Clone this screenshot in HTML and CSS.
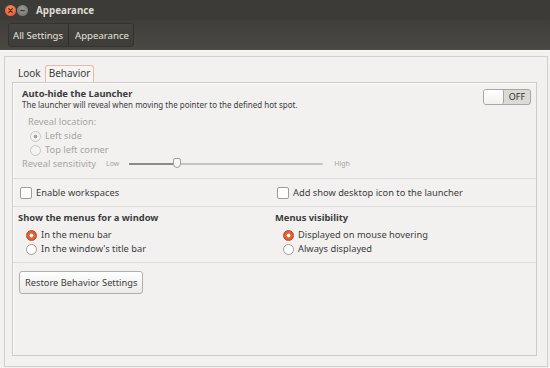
FILE: index.html
```html
<!DOCTYPE html>
<html lang="en">
<head>
  <meta charset="UTF-8">
  <title>Appearance</title>
  <link rel="stylesheet" href="styles.css">
</head>
<body>
  <div class="window">
    <!-- title bar -->
    <div class="titlebar">
      <span class="wbtn close"><svg width="11" height="11" viewBox="0 0 11 11"><path d="M3.7 3.7 L7.3 7.3 M7.3 3.7 L3.7 7.3" stroke="#5a2412" stroke-width="1.2" stroke-linecap="round"/></svg></span>
      <span class="wbtn mini"><svg width="11" height="11" viewBox="0 0 11 11"><path d="M3.3 5.5 H7.7" stroke="#3a3936" stroke-width="1.2"/></svg></span>
      <span class="title">Appearance</span>
    </div>

    <!-- breadcrumb toolbar -->
    <div class="toolbar">
      <div class="crumbs">
        <span class="crumb">All Settings</span>
        <span class="crumb">Appearance</span>
      </div>
    </div>

    <div class="content">
      <div class="frame">
        <div class="tabs">
          <span class="tab">Look</span>
          <span class="tab active">Behavior</span>
        </div>

        <div class="panel">
          <div class="launcher">
            <div class="head">
              <div>
                <div class="bold">Auto-hide the Launcher</div>
                <div class="desc">The launcher will reveal when moving the pointer to the defined hot spot.</div>
              </div>
              <div class="toggle"><span class="knob"></span><span class="off">OFF</span></div>
            </div>
            <div class="disabled loc">Reveal location:</div>
            <div class="row disabled indent"><span class="radio dis on"></span>Left side</div>
            <div class="row disabled indent"><span class="radio dis"></span>Top left corner</div>
            <div class="row disabled sens">
              <span class="sens-label">Reveal sensitivity</span>
              <span class="tiny low">Low</span>
              <span class="slider"><span class="fill"></span><span class="thumb"></span></span>
              <span class="tiny">High</span>
            </div>
          </div>

          <div class="grid checks">
            <div class="row"><span class="check"></span>Enable workspaces</div>
            <div class="row"><span class="check"></span>Add show desktop icon to the launcher</div>
          </div>

          <div class="grid menus">
            <div>
              <div class="bold">Show the menus for a window</div>
              <div class="row opt first"><span class="radio on"></span>In the menu bar</div>
              <div class="row opt"><span class="radio"></span>In the window's title bar</div>
            </div>
            <div>
              <div class="bold">Menus visibility</div>
              <div class="row opt first"><span class="radio on"></span>Displayed on mouse hovering</div>
              <div class="row opt"><span class="radio"></span>Always displayed</div>
            </div>
          </div>

          <div class="restore">
            <button class="btn">Restore Behavior Settings</button>
          </div>
        </div>
      </div>
    </div>
  </div>
</body>
</html>
```
FILE: styles.css
```css
html, body {
  margin: 0;
  padding: 0;
  background: #f2f1f0;
  color: #3c3c3c;
  font-family: 'Noto Sans', 'DejaVu Sans', sans-serif;
  font-size: 9.3px;
}
.window {
  width: 550px;
  height: 368px;
  overflow: hidden;
  display: flex;
  flex-direction: column;
}
/* title bar */
.titlebar {
  height: 20px;
  background: #3c3b37;
  display: flex;
  align-items: center;
  padding-left: 5px;
}
.wbtn {
  width: 11px;
  height: 11px;
  border-radius: 50%;
  margin-right: 1px;
  display: flex;
}
.close {
  background: radial-gradient(circle at 50% 35%, #f58c5c, #df5526);
}
.mini {
  background: radial-gradient(circle at 50% 35%, #9a9893, #6e6d69);
}
.title {
  margin-left: 7px;
  color: #dfdbd2;
  font-weight: bold;
  font-size: 9.8px;
}
/* toolbar */
.toolbar {
  height: 30px;
  background: linear-gradient(#3f3e3a, #4a4944);
  display: flex;
  align-items: center;
  padding-left: 8px;
}
.crumbs {
  display: flex;
  border: 1px solid #34332f;
  border-radius: 3px;
  height: 22px;
  background: linear-gradient(#45443f, #3e3d39);
}
.crumb {
  color: #e6e3dc;
  font-size: 9.6px;
  padding: 0 5px 0 4px;
  display: flex;
  align-items: center;
}
.crumb + .crumb {
  border-left: 1px solid #2f2e2b;
  padding: 0 4px 0 6px;
}
/* content frame */
.content {
  flex: 1;
  padding: 5px 2px 1px 4px;
  background: #f2f1f0;
  border-top: 1px solid #fbfbfa;
}
.frame {
  height: 100%;
  box-sizing: border-box;
  border: 1px solid #d3d0cb;
  padding: 7px 10px 10px 7px;
  display: flex;
  flex-direction: column;
}
.tabs {
  display: flex;
  align-items: flex-end;
  height: 18px;
  padding-left: 3px;
}
.tab {
  padding: 0 3px 1px 3px;
  font-size: 10px;
  color: #3c3c3c;
  line-height: 15px;
}
.tab.active {
  border: 1px solid #e9b9a9;
  border-bottom: none;
  border-radius: 3px 3px 0 0;
  background: #f6f5f4;
  margin-left: 1px;
  padding: 0 3px 1px 3px;
}
.panel {
  flex: 1;
  border: 1px solid #cfccc7;
  box-shadow: inset 1px 1px 0 #fbfbfa;
  display: flex;
  flex-direction: column;
}
.bold {
  font-weight: bold;
  font-size: 9.4px;
  line-height: 12px;
}
.desc {
  font-size: 8px;
  line-height: 10px;
}
.disabled {
  color: #a7a49f;
}
.launcher {
  padding: 5px 5px 7px 9px;
  border-bottom: 1px solid #dedcd8;
}
.head {
  display: flex;
  justify-content: space-between;
  align-items: flex-start;
}
.toggle {
  margin-top: 1px;
  width: 46px;
  height: 14px;
  border: 1px solid #a9a6a1;
  border-radius: 3px;
  display: flex;
  overflow: hidden;
  background: #dcdad6;
}
.knob {
  width: 19px;
  background: linear-gradient(#ffffff, #f1f0ee);
  border-right: 1px solid #a9a6a1;
  border-radius: 0 2px 2px 0;
}
.off {
  flex: 1;
  text-align: center;
  font-size: 9px;
  line-height: 14px;
  color: #2e2e2e;
}
.loc {
  margin-top: 5px;
  padding-left: 6px;
  line-height: 14px;
}
.row {
  display: flex;
  align-items: center;
  line-height: 14px;
}
.indent {
  padding-left: 8px;
}
.radio {
  width: 9px;
  height: 9px;
  border-radius: 50%;
  border: 1px solid #9f9c97;
  background: #ffffff;
  margin-right: 4px;
}
.radio.on {
  border-color: #b94a22;
  background: radial-gradient(circle, #ffffff 0 1.6px, #e8673a 2.2px, #d9531f);
}
.radio.dis {
  border-color: #c9c6c1;
  background: #f4f3f2;
}
.radio.dis.on {
  background: radial-gradient(circle, #a7a49f 0 1.6px, #f4f3f2 2.2px);
}
.sens-label {
  width: 77px;
}
.tiny {
  font-size: 7px;
}
.low {
  margin-left: 7px;
}
.slider {
  width: 194px;
  height: 2px;
  margin: 0 11px 0 10px;
  background: #c7c5c1;
  position: relative;
  border-radius: 1px;
}
.fill {
  display: block;
  width: 48px;
  height: 2px;
  background: #8d8a85;
}
.thumb {
  position: absolute;
  left: 44px;
  top: -5px;
  width: 8px;
  height: 10px;
  box-sizing: border-box;
  background: #f7f6f5;
  border: 1px solid #a29f9a;
  border-radius: 2px 2px 4px 4px;
}
.grid {
  display: grid;
  grid-template-columns: 257px 1fr;
  border-bottom: 1px solid #dedcd8;
}
.checks {
  height: 27px;
  align-items: center;
  padding-left: 7px;
}
.check {
  width: 10px;
  height: 10px;
  border: 1px solid #9f9c97;
  border-radius: 2px;
  background: #ffffff;
  margin-right: 4px;
}
.menus {
  padding-top: 5px;
  padding-bottom: 6px;
  padding-left: 5px;
}
.opt {
  padding-left: 8px;
}
.opt.first {
  margin-top: 4px;
}
.restore {
  padding: 8px 6px;
}
.btn {
  font-family: 'Noto Sans', 'DejaVu Sans', sans-serif;
  font-size: 9.3px;
  color: #3c3c3c;
  height: 23px;
  padding: 0 5px;
  border: 1px solid #b3b0ab;
  border-radius: 3px;
  background: linear-gradient(#ffffff, #eceae8);
}
```
